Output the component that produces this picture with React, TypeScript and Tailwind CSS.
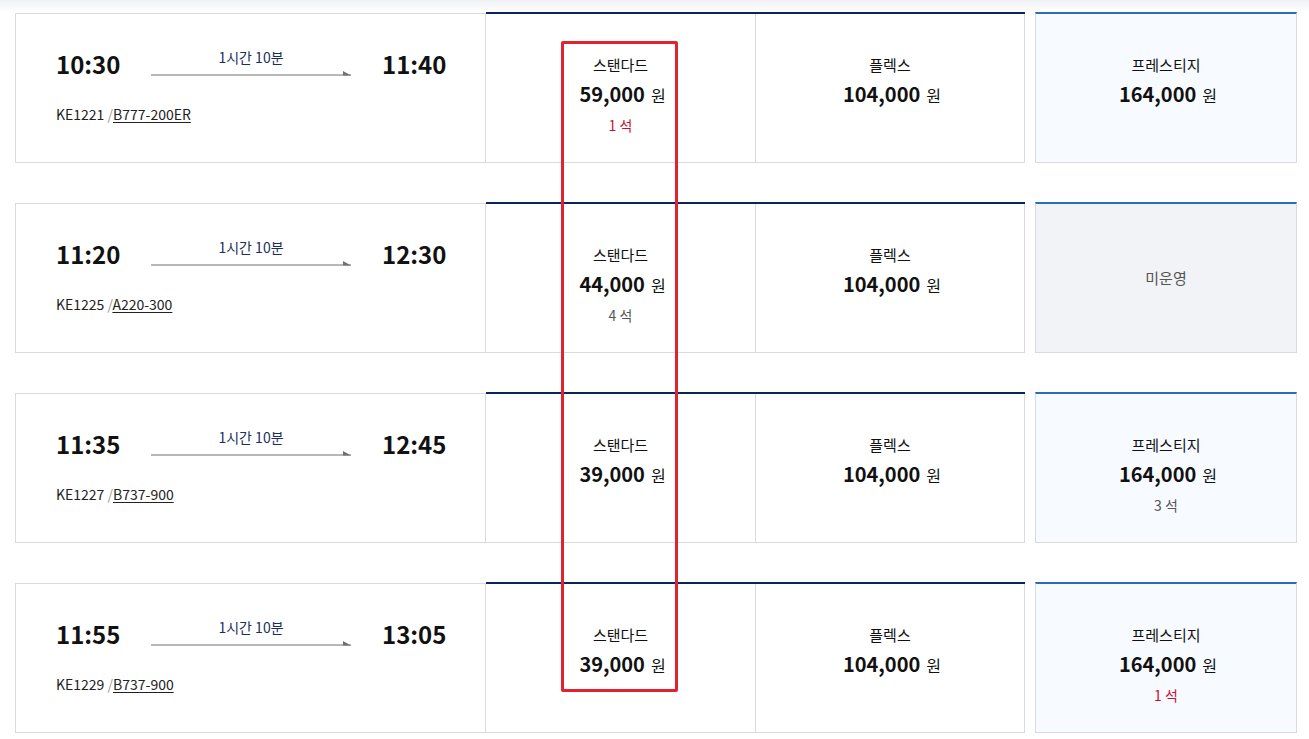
import React from 'react';

interface Fare {
  label: string;
  price?: string;
  seats?: string;
  seatsRed?: boolean;
  closed?: boolean;
}

interface Flight {
  dep: string;
  arr: string;
  duration: string;
  code: string;
  aircraft: string;
  standard: Fare;
  flex: Fare;
  prestige: Fare;
}

const flights: Flight[] = [
  {
    dep: '10:30',
    arr: '11:40',
    duration: '1시간 10분',
    code: 'KE1221',
    aircraft: 'B777-200ER',
    standard: { label: '스탠다드', price: '59,000', seats: '1 석', seatsRed: true },
    flex: { label: '플렉스', price: '104,000' },
    prestige: { label: '프레스티지', price: '164,000' },
  },
  {
    dep: '11:20',
    arr: '12:30',
    duration: '1시간 10분',
    code: 'KE1225',
    aircraft: 'A220-300',
    standard: { label: '스탠다드', price: '44,000', seats: '4 석' },
    flex: { label: '플렉스', price: '104,000' },
    prestige: { label: '미운영', closed: true },
  },
  {
    dep: '11:35',
    arr: '12:45',
    duration: '1시간 10분',
    code: 'KE1227',
    aircraft: 'B737-900',
    standard: { label: '스탠다드', price: '39,000' },
    flex: { label: '플렉스', price: '104,000' },
    prestige: { label: '프레스티지', price: '164,000', seats: '3 석' },
  },
  {
    dep: '11:55',
    arr: '13:05',
    duration: '1시간 10분',
    code: 'KE1229',
    aircraft: 'B737-900',
    standard: { label: '스탠다드', price: '39,000' },
    flex: { label: '플렉스', price: '104,000' },
    prestige: { label: '프레스티지', price: '164,000', seats: '1 석', seatsRed: true },
  },
];

const FareContent: React.FC<{ fare: Fare }> = ({ fare }) => (
  <div className="flex flex-col items-center pt-[40px]">
    <div className="text-[15px] leading-[22px] text-[#111]">{fare.label}</div>
    <div className="mt-[5px] ml-[4px] leading-[26px] text-[#111]">
      <span className="text-[20px] font-bold">{fare.price}</span>
      <span className="ml-[6px] text-[16px]">원</span>
    </div>
    {fare.seats && (
      <div
        className={`mt-[7px] text-[14px] leading-[20px] ${
          fare.seatsRed ? 'text-[#c8102e]' : 'text-[#555]'
        }`}
      >
        {fare.seats}
      </div>
    )}
  </div>
);

const FlightRow: React.FC<{ flight: Flight }> = ({ flight }) => (
  <div className="flex items-end">
    {/* Flight info */}
    <div className="w-[471px] h-[150px] border border-[#dadada] bg-white pl-[40px] pt-[33px]">
      <div className="flex items-end">
        <span className="w-[95px] text-[24px] font-bold leading-[32px] text-[#111]">{flight.dep}</span>
        <div className="w-[200px] flex flex-col items-center">
          <span className="text-[14px] leading-[20px] text-[#1b2f5e]">{flight.duration}</span>
          <svg width="200" height="8" viewBox="0 0 200 8" className="mt-[1px] mb-[4px]">
            <line x1="0" y1="7" x2="200" y2="7" stroke="#707070" strokeWidth="1" />
            <polygon points="192,3 200,7.5 192,7.5" fill="#707070" />
          </svg>
        </div>
        <span className="ml-[31px] text-[24px] font-bold leading-[32px] text-[#111]">{flight.arr}</span>
      </div>
      <div className="mt-[24px] text-[14px] leading-[20px] text-[#222]">
        {flight.code} <span className="text-[#999]">/</span>
        <span className="underline underline-offset-2">{flight.aircraft}</span>
      </div>
    </div>

    {/* Standard + Flex */}
    <div className="flex h-[151px] border-t-2 border-t-[#0a2559] border-b border-b-[#dadada] bg-white">
      <div className="w-[269px]">
        <FareContent fare={flight.standard} />
      </div>
      <div className="w-[270px] border-l border-r border-[#dadada]">
        <FareContent fare={flight.flex} />
      </div>
    </div>

    {/* Prestige */}
    {flight.prestige.closed ? (
      <div className="ml-[10px] w-[262px] h-[151px] border-t-2 border-t-[#2b6cbf] border-x border-b border-[#dadada] bg-[#f2f3f7] flex items-center justify-center">
        <span className="text-[15px] text-[#555]">{flight.prestige.label}</span>
      </div>
    ) : (
      <div className="ml-[10px] w-[262px] h-[151px] border-t-2 border-t-[#2b6cbf] border-x border-b border-[#dadada] bg-[#f7faff]">
        <FareContent fare={flight.prestige} />
      </div>
    )}
  </div>
);

export default function App() {
  return (
    <div
      className="relative min-h-[739px] w-[1309px] bg-white"
      style={{ fontFamily: '"Noto Sans CJK KR", "Noto Sans", sans-serif' }}
    >
      <div className="h-[12px] bg-gradient-to-b from-[#eff1f4] to-white" />
      <div className="flex flex-col gap-[39px] pl-[15px]">
        {flights.map((f) => (
          <FlightRow key={f.code} flight={f} />
        ))}
      </div>
      {/* Highlight box */}
      <div className="pointer-events-none absolute left-[561px] top-[41px] w-[117px] h-[651px] border-[3px] border-[#e0232e] rounded-[2px]" />
    </div>
  );
}
